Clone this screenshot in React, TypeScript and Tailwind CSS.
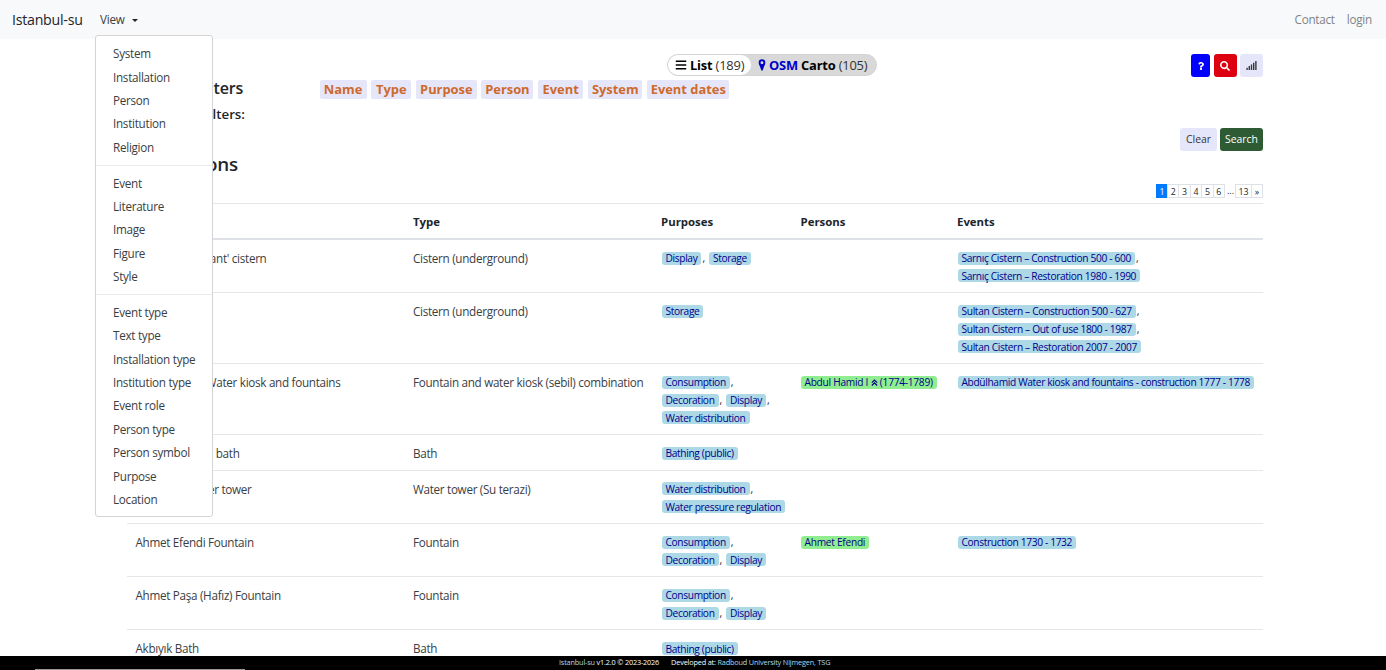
import { Fragment, type ReactNode } from "react";
import clsx from "clsx";
import { FaBars, FaQuestion, FaSearch, FaSignal } from "react-icons/fa";

const MENU = [
    ["System", "Installation", "Person", "Institution", "Religion"],
    ["Event", "Literature", "Image", "Figure", "Style"],
    ["Event type", "Text type", "Installation type", "Institution type", "Event role", "Person type", "Person symbol", "Purpose", "Location"],
];

const FILTERS = [
    { label: "Name", width: "w-[47px]" },
    { label: "Type", width: "w-[40px]" },
    { label: "Purpose", width: "w-[60.5px]" },
    { label: "Person", width: "w-[52px]" },
    { label: "Event", width: "w-[45px]" },
    { label: "System", width: "w-[54.5px]" },
    { label: "Event dates", width: "w-[82px]" },
];

interface Installation {
    name: string;
    nameWidth?: string;
    type: string;
    height: string;
    purposes: string[][];
    person?: ReactNode;
    events?: string[];
}

const ROWS: Installation[] = [
    {
        name: "Sarnıç 'Elephant' cistern",
        nameWidth: "w-[131px]",
        type: "Cistern (underground)",
        height: "h-[53.3px]",
        purposes: [["Display", "Storage"]],
        events: ["Sarnıç Cistern – Construction 500 - 600", "Sarnıç Cistern – Restoration 1980 - 1990"],
    },
    {
        name: "Sultan",
        type: "Cistern (underground)",
        height: "h-[71px]",
        purposes: [["Storage"]],
        events: ["Sultan Cistern – Construction 500 - 627", "Sultan Cistern – Out of use 1800 - 1987", "Sultan Cistern – Restoration 2007 - 2007"],
    },
    {
        name: "Abdülhamid Water kiosk and fountains",
        nameWidth: "w-[205px]",
        type: "Fountain and water kiosk (sebil) combination",
        height: "h-[71px]",
        purposes: [["Consumption"], ["Decoration", "Display"], ["Water distribution"]],
        person: <>Abdul Hamid I <Crown /> (1774-1789)</>,
        events: ["Abdülhamid Water kiosk and fountains - construction 1777 - 1778"],
    },
    {
        name: "Ağa Hamamı bath",
        nameWidth: "w-[104px]",
        type: "Bath",
        height: "h-[35.5px]",
        purposes: [["Bathing (public)"]],
    },
    {
        name: "Ahmediye water tower",
        nameWidth: "w-[116px]",
        type: "Water tower (Su terazi)",
        height: "h-[53.3px]",
        purposes: [["Water distribution"], ["Water pressure regulation"]],
    },
    {
        name: "Ahmet Efendi Fountain",
        type: "Fountain",
        height: "h-[53.2px]",
        purposes: [["Consumption"], ["Decoration", "Display"]],
        person: "Ahmet Efendi",
        events: ["Construction 1730 - 1732"],
    },
    {
        name: "Ahmet Paşa (Hafız) Fountain",
        type: "Fountain",
        height: "h-[53.2px]",
        purposes: [["Consumption"], ["Decoration", "Display"]],
    },
    {
        name: "Akbıyık Bath",
        type: "Bath",
        height: "h-[53.2px]",
        purposes: [["Bathing (public)"]],
    },
];

const COLUMNS = "grid grid-cols-[277px_248px_139.5px_156.5px_315px]";

function Crown() {
    return (
        <svg viewBox="0 0 8 8" className="inline size-[7px] align-[0px]" fill="none" stroke="currentColor" strokeWidth="1.4">
            <path d="M1 4.2 4 1.2l3 3M1 7.4l3-3 3 3" />
        </svg>
    );
}

function Marker() {
    return (
        <svg viewBox="0 0 8 13" className="h-[12px] w-[8px]" fill="none">
            <circle cx="4" cy="4" r="2.6" stroke="#0000cd" strokeWidth="2" />
            <path d="M.9 5.8h6.2L4.7 12.4H3.3z M2.6 5.6 4 6.6l1.4-1z" fill="#0000cd" />
        </svg>
    );
}

function Badge({ children, green }: { children: ReactNode; green?: boolean }) {
    return (
        <span className={clsx("inline-flex h-[13px] items-center rounded-[3px] px-[4px] whitespace-pre text-[#00008b]", green ? "bg-[#90ee90]" : "bg-[#add8e6]")}>
            <span>{children}</span>
        </span>
    );
}

function BadgeLines({ lines }: { lines: string[][] }) {
    return (
        <div className="pt-[9.2px] pl-[9.5px] text-[10.2px] tracking-[-0.35px]">
            {lines.map((line, i) => (
                <div key={i} className="flex h-[17.7px] items-center whitespace-pre">
                    {line.map((text, j) => (
                        <Fragment key={text}>
                            <Badge>{text}</Badge>
                            {(i < lines.length - 1 || j < line.length - 1) && <span className="w-[7.5px] pl-px text-[#212529]">,</span>}
                        </Fragment>
                    ))}
                </div>
            ))}
        </div>
    );
}

function ViewMenu() {
    return (
        <div className="absolute top-[35px] left-[95px] z-10 w-[118px] rounded-[3px] border border-[#d4d4d4] bg-white pt-[6.3px] pb-[5px] text-[11.7px] tracking-[-0.28px] text-[#3a3e42]">
            {MENU.map((group, i) => (
                <div key={group[0]} className={clsx(i > 0 && "mt-[5.3px] border-t border-[#e9ecef] pt-[6px]")}>
                    {group.map((item) => (
                        <div key={item} className="h-[23.4px] pl-[17px] leading-[23.4px] whitespace-nowrap">{item}</div>
                    ))}
                </div>
            ))}
        </div>
    );
}

function Pagination() {
    const box = "flex h-[14px] items-center justify-center border border-[#dee2e6] -ml-px";
    return (
        <div className="flex h-[14px] text-[8.8px] leading-[14px] text-[#212529]">
            <span className="flex h-[14px] w-[12px] items-center justify-center bg-[#007bff] pt-px text-white">1</span>
            {[2, 3, 4, 5, 6].map((n) => (
                <span key={n} className={clsx(box, "w-[12.4px] pt-px")}>{n}</span>
            ))}
            <span className="mt-[3px] flex w-[11px] items-end justify-center">...</span>
            <span className={clsx(box, "w-[17px] pt-px")}>13</span>
            <span className={clsx(box, "w-[12px] pt-px")}>»</span>
        </div>
    );
}

function App() {
    return (
        <div className="relative h-[670px] w-[1386px] overflow-hidden bg-white font-['Open_Sans',sans-serif] text-[#212529]">
            <nav className="flex h-[39px] items-center bg-[#f8f9fa] pr-[14px] pl-[12px] text-[11.7px] tracking-[-0.25px]">
                <span className="w-[88px] text-[14.2px] tracking-[-0.25px] whitespace-nowrap">Istanbul-su</span>
                <span className="text-[#3a3e42]">View</span>
                <span className="mt-[1px] ml-[7px] border-x-[3px] border-t-[3px] border-x-transparent border-t-[#212529]" />
                <span className="ml-auto text-[#808388]">Contact</span>
                <span className="ml-[12px] text-[#808388]">login</span>
            </nav>
            <ViewMenu />

            <main className="ml-[127px] flex w-[1136px] flex-col pt-[15px]">
                <div className="flex h-[23px] pl-[540px]">
                    <div className="flex h-[22px] w-[210px] items-center rounded-full border border-[#d3d3d3] bg-[#d9d9d9] text-[12.9px] tracking-[-0.2px] whitespace-nowrap">
                        <div className="flex h-full w-[83px] items-center gap-[3px] rounded-full bg-white pl-[7px] text-black">
                            <FaBars className="size-[12px]" />
                            <span className="pt-[2px]"><b>List</b> <span className="text-[#333]">(189)</span></span>
                        </div>
                        <div className="flex items-center gap-[3px] pl-[7px] text-black">
                            <Marker />
                            <span className="pt-[2px]"><b className="text-[#0000cd]">OSM</b> <b>Carto</b> <span className="text-[#333]">(105)</span></span>
                        </div>
                    </div>
                    <div className="ml-auto flex gap-[3.5px]">
                        <span className="flex h-[23px] w-[19px] items-center justify-center rounded-[3px] bg-[#0000ff] text-white"><FaQuestion className="size-[8px]" /></span>
                        <span className="flex h-[23px] w-[23px] items-center justify-center rounded-[3px] bg-[#dc0010] text-white"><FaSearch className="size-[10px]" /></span>
                        <span className="flex h-[23px] w-[23px] items-center justify-center rounded-[3px] bg-[#e6e6fa] text-[#333]"><FaSignal className="size-[11px]" /></span>
                    </div>
                </div>

                <div className="mt-[3px] flex h-[19px] items-center">
                    <h2 className="flex w-[116px] justify-end pb-[3px] text-[16px] font-semibold tracking-[-0.2px] whitespace-nowrap">Search filters</h2>
                    <div className="ml-[76.5px] flex gap-[4.8px] text-[12.9px] font-bold text-[#cd6a2c]">
                        {FILTERS.map((f) => (
                            <span key={f.label} className={clsx("flex h-[19px] items-center justify-center rounded-[2px] bg-[#e6e6fa] whitespace-nowrap", f.width)}>{f.label}</span>
                        ))}
                    </div>
                </div>
                <h3 className="mt-[6px] flex h-[20px] w-[118px] justify-end text-[13.3px] leading-[19px] font-semibold whitespace-nowrap">Active filters:</h3>

                <div className="mt-[3px] flex h-[23px] justify-end gap-[3px] text-[10.4px]">
                    <button className="w-[37px] rounded-[3px] bg-[#e6e6fa] pt-px text-[#333]">Clear</button>
                    <button className="w-[43px] rounded-[3px] bg-[#2f5b34] pt-px text-white">Search</button>
                </div>
                <div className="flex h-[52px] justify-between">
                    <h1 className="flex h-[26px] w-[111px] justify-end text-[18.8px] leading-[26px] font-semibold tracking-[-0.2px] whitespace-nowrap">Installations</h1>
                    <div className="pt-[33px]"><Pagination /></div>
                </div>

                <div className={clsx(COLUMNS, "h-[37px] border-t border-b-2 border-t-[#e4e7ea] border-b-[#dee2e6] pl-[9px] text-[11.4px] leading-[35px] font-bold")}>
                    <span>Name</span>
                    <span>Type</span>
                    <span>Purposes</span>
                    <span>Persons</span>
                    <span>Events</span>
                </div>
                {ROWS.map((row) => (
                    <div key={row.name} className={clsx(COLUMNS, "shrink-0 border-b border-[#e4e7ea] text-[11.7px] leading-[18px] tracking-[-0.3px] text-[#3a3e42]", row.height)}>
                        <div className="pt-[9px] pl-[8.5px] whitespace-nowrap">
                            <div className={clsx(row.nameWidth, row.nameWidth && "flex justify-end")}>{row.name}</div>
                        </div>
                        <div className="pt-[9px] pl-[9px] whitespace-nowrap">{row.type}</div>
                        <BadgeLines lines={row.purposes} />
                        <div className="flex pt-[11.8px] pl-[9px] text-[10.2px] leading-[13px] tracking-[-0.28px]">{row.person && <Badge green>{row.person}</Badge>}</div>
                        <BadgeLines lines={(row.events ?? []).map((e) => [e])} />
                    </div>
                ))}
            </main>

            <footer className="absolute inset-x-0 bottom-0 z-20 flex h-[14px] flex-col justify-between bg-black">
                <div className="flex gap-[12px] pl-[559px] text-[7.3px] leading-[13px] tracking-[-0.17px] whitespace-nowrap text-white">
                    <span><span className="text-[#add8e6]">Istanbul-su</span> v1.2.0 © 2023-2026</span>
                    <span>Developed at: <span className="text-[#add8e6]">Radboud University Nijmegen, TSG</span></span>
                </div>
                <div className="ml-[35px] h-px w-[210px] bg-[#999]" />
            </footer>
        </div>
    );
}

export default App;
